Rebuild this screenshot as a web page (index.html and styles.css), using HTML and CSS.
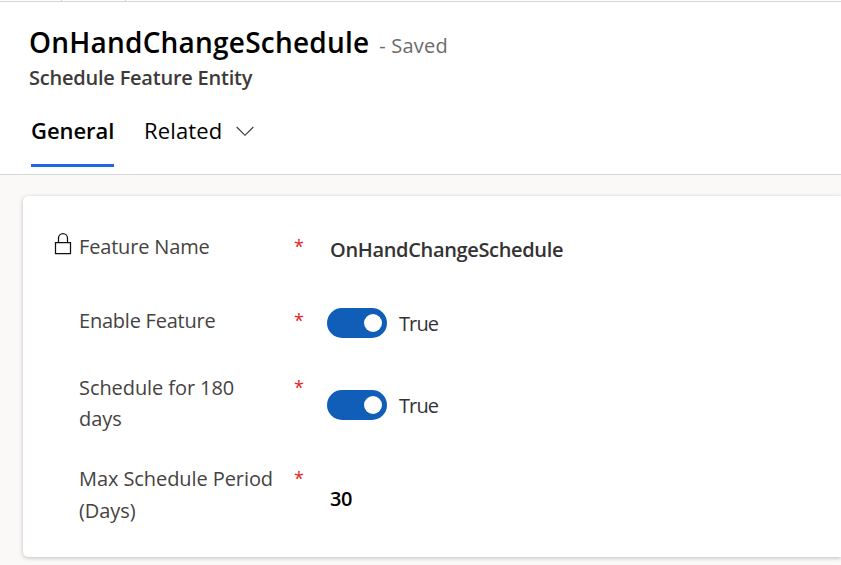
FILE: index.html
```html
<!DOCTYPE html>
<html lang="en">
<head>
<meta charset="utf-8">
<title>OnHandChangeSchedule</title>
<link rel="stylesheet" href="styles.css">
</head>
<body>
<div class="toolbar-edge"></div>
<header class="header">
  <div class="heading"><h1 class="title">OnHandChangeSchedule</h1><span class="status">- Saved</span></div>
  <div class="entity">Schedule Feature Entity</div>
  <nav class="tabs">
    <span class="tab active">General</span>
    <span class="tab related">Related<svg class="chevron" width="18" height="11" viewBox="0 0 18 11"><path d="M.7 1 9 9.3 17.3 1" fill="none" stroke="#333" stroke-width="1.1"/></svg></span>
  </nav>
</header>
<main class="content">
  <section class="card">
    <div class="row name-row">
      <svg class="lock" width="18" height="23" viewBox="0 0 18 23"><path d="M1.5 10.5h15v11h-15zM4.5 10.5V6a4.5 4.5 0 0 1 9 0v4.5" fill="none" stroke="#111" stroke-width="1.25"/></svg>
      <label class="label feature-label">Feature Name</label><span class="req">*</span>
      <span class="value">OnHandChangeSchedule</span>
    </div>
    <div class="row enable-row">
      <label class="label enable-label">Enable Feature</label><span class="req">*</span>
      <span class="toggle"></span><span class="state">True</span>
    </div>
    <div class="row days-row">
      <label class="label">Schedule for 180<br>days</label><span class="req">*</span>
      <span class="toggle"></span><span class="state">True</span>
    </div>
    <div class="row max-row">
      <label class="label">Max Schedule Period<br>(Days)</label><span class="req">*</span>
      <span class="value number">30</span>
    </div>
  </section>
</main>
</body>
</html>
```
FILE: styles.css
```css
* { box-sizing: border-box; }
body { margin: 0; width: 841px; height: 565px; overflow: hidden; background: #faf9f8; color: #000; font-family: "Open Sans", "Noto Sans", sans-serif; }
.toolbar-edge { height: 2px; border-bottom: 1px solid #d5d7d7; background: linear-gradient(#ccc, #ccc) 61px 0 / 1px 1px no-repeat, linear-gradient(#ccc, #ccc) 125px 0 / 1px 1px no-repeat, #fff; }
.header { height: 173px; padding: 20px 29px 0; background: #fff; border-bottom: 1px solid #d3d7d6; }
.heading { display: flex; align-items: baseline; height: 42px; line-height: 41px; white-space: nowrap; }
.title { margin: 0; font-size: 28px; font-weight: 600; letter-spacing: .22px; }
.status { margin-left: 10px; font-size: 20px; letter-spacing: .2px; color: #6b6b6b; }
.entity { height: 28px; line-height: 28px; font-size: 20px; font-weight: 600; letter-spacing: -.22px; color: #3d3b3a; }
.tabs { display: flex; gap: 30px; margin: 19px 0 0 2px; font-size: 22px; line-height: 38px; }
.tab { display: flex; align-items: center; height: 56px; padding-bottom: 18px; white-space: nowrap; }
.active { width: 83px; font-weight: 600; letter-spacing: -.05px; border-bottom: 3px solid #2266e3; padding-bottom: 15px; }
.related { letter-spacing: .16px; }
.chevron { margin: 2px 0 0 13px; }
.content { padding: 21px 0 0 23px; }
.card { height: 361px; padding-left: 56px; background: #fff; border-radius: 5px 0 0 5px; box-shadow: 0 1px 4px rgba(0, 0, 0, .24); }
.row { display: flex; position: relative; font-size: 20px; line-height: 31px; color: #333; white-space: nowrap; }
.name-row { padding-top: 35px; height: 109px; }
.enable-row { height: 67px; }
.days-row { height: 91px; }
.label { width: 215px; color: #454341; letter-spacing: -.08px; }
.feature-label { letter-spacing: -.17px; }
.enable-label { letter-spacing: -.23px; }
.max-row .label { line-height: 32px; }
.req { width: 33px; color: #e81b23; font-size: 18px; }
.value { margin: 3px 0 0 3px; font-weight: 600; letter-spacing: -.34px; }
.number { margin-top: 20px; color: #000; }
.toggle { display: flex; justify-content: flex-end; width: 60px; height: 30px; padding: 6px 5px; border-radius: 15px; background: #115eb8; margin-top: 3px; }
.toggle::after { content: ""; width: 18px; height: 18px; border-radius: 50%; background: #fff; }
.state { margin: 3px 0 0 12px; letter-spacing: -.9px; }
.days-row .toggle, .days-row .state { margin-top: 18px; }
.lock { position: absolute; left: -25px; top: 36px; }
```
